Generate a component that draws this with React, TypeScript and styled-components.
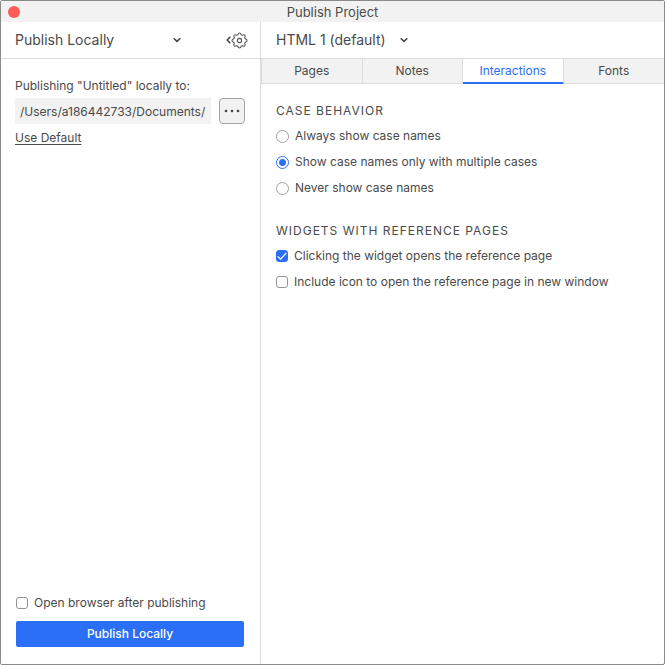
import React, { useState } from "react";
import styled, { createGlobalStyle } from "styled-components";

const GlobalStyle = createGlobalStyle`
  * { box-sizing: border-box; }
  body {
    margin: 0;
    background: #fff;
    color: #4a4a4a;
    font: 12px/16px Inter, "Liberation Sans", sans-serif;
  }
  button, input, select { font: inherit; color: inherit; margin: 0; }
`;

const Window = styled.div`
  display: flex;
  flex-direction: column;
  min-height: 100vh;
  border: 1px solid #8b8a8b;
  border-radius: 2px;
`;

const TitleBar = styled.header`
  display: grid;
  grid-template-columns: 20px 1fr 20px;
  align-items: center;
  height: 21px;
  padding: 0 7px;
  background: #f2f2f2;
`;

const CloseButton = styled.button`
  width: 12px;
  height: 12px;
  padding: 0;
  border: 0;
  border-radius: 50%;
  background: #fc5b57;
`;

const Title = styled.h1`
  margin: 0;
  font-size: 13px;
  font-weight: 400;
  text-align: center;
`;

const Body = styled.div`
  flex: 1;
  display: grid;
  grid-template-columns: 260px minmax(0, 1fr);
`;

const Sidebar = styled.aside`
  display: flex;
  flex-direction: column;
  border-right: 1px solid #dcdcdc;
`;

const PaneHeader = styled.div`
  display: flex;
  align-items: center;
  justify-content: space-between;
  height: 37px;
  padding: 0 12px 0 14px;
  border-bottom: 1px solid #dcdcdc;
`;

const MainHeader = styled(PaneHeader)`
  padding: 0 15px;
`;

const SelectBox = styled.div<{ $width: number }>`
  display: grid;
  align-items: center;
  width: ${(p) => p.$width}px;

  > * { grid-area: 1 / 1; }
  > svg { justify-self: end; pointer-events: none; }
`;

const Select = styled.select`
  appearance: none;
  width: 100%;
  height: 24px;
  padding: 0;
  border: 0;
  background: transparent;
  font-size: 14px;
`;

const IconButton = styled.button`
  display: flex;
  align-items: center;
  padding: 0;
  border: 0;
  background: none;
`;

const Destination = styled.div`
  flex: 1;
  display: flex;
  flex-direction: column;
  align-items: flex-start;
  padding: 19px 15px 0 14px;
`;

const PathRow = styled.div`
  display: flex;
  gap: 8px;
  width: 100%;
  margin: 4px 0 6px;
`;

const PathInput = styled.input`
  flex: 1;
  min-width: 0;
  height: 26px;
  padding: 0 5px;
  border: 0;
  background: #f2f2f2;
`;

const BrowseButton = styled.button`
  display: flex;
  align-items: center;
  justify-content: center;
  width: 26px;
  height: 26px;
  padding: 0;
  border: 1px solid #a3a3a3;
  border-radius: 4px;
  background: #f2f2f2;
`;

const TextLink = styled.a`
  color: inherit;
  text-underline-offset: 2px;
`;

const Footer = styled.footer`
  display: flex;
  flex-direction: column;
  gap: 10px;
  padding: 0 16px 17px 15px;
`;

const PublishButton = styled.button`
  height: 26px;
  border: 0;
  border-radius: 2px;
  background: #2b6ff6;
  color: #fff;
  font-weight: 500;
`;

const Tabs = styled.div`
  display: grid;
  grid-template-columns: repeat(4, 1fr);
  border-left: 1px solid #dcdcdc;
`;

const Tab = styled.button<{ $active: boolean }>`
  height: 25px;
  padding: 0;
  border: 0;
  border-right: 1px solid #dcdcdc;
  border-bottom: 1px solid ${(p) => (p.$active ? "#2b6ff6" : "#dcdcdc")};
  background: ${(p) => (p.$active ? "#fff" : "#f2f2f2")};
  color: ${(p) => (p.$active ? "#2b6ff6" : "inherit")};
  box-shadow: ${(p) => (p.$active ? "inset 0 -1px #2b6ff6" : "none")};

  &:last-child { border-right: 0; }
`;

const Settings = styled.div`
  display: flex;
  flex-direction: column;
  gap: 27px;
  padding: 19px 15px;
`;

const Group = styled.fieldset`
  display: flex;
  flex-direction: column;
  gap: 10px;
  min-width: 0;
  margin: 0;
  padding: 0;
  border: 0;
`;

const GroupTitle = styled.legend`
  margin-bottom: 9px;
  padding: 0;
  letter-spacing: 1px;
`;

const Option = styled.label`
  display: flex;
  align-items: center;
  gap: 6px;
`;

const Radio = styled.input`
  appearance: none;
  flex: none;
  width: 13px;
  height: 13px;
  border: 1px solid #a0a0a0;
  border-radius: 50%;
  background: #fff;

  &:checked {
    border-color: #2b6ff6;
    background: radial-gradient(#2b6ff6 0 3px, #fff 4px);
  }
`;

const CheckFrame = styled.span`
  display: grid;
  flex: none;

  > * { grid-area: 1 / 1; }
  > svg { pointer-events: none; }
`;

const CheckInput = styled.input`
  appearance: none;
  width: 12px;
  height: 12px;
  border: 1px solid #949494;
  border-radius: 3px;
  background: #fff;

  &:checked {
    border-color: #2b6ff6;
    background: #2b6ff6;
  }
`;

function Chevron() {
  return (
    <svg width="8" height="6" viewBox="0 0 8 6" fill="none" stroke="#444" strokeWidth="1.5" aria-hidden="true">
      <path d="M0.7 1.2 L4 4.4 L7.3 1.2" />
    </svg>
  );
}

function Dropdown(props: { label: string; value: string; width: number }) {
  return (
    <SelectBox $width={props.width}>
      <Select aria-label={props.label} defaultValue={props.value}>
        <option>{props.value}</option>
      </Select>
      <Chevron />
    </SelectBox>
  );
}

function Checkbox(props: { label: string; initial?: boolean }) {
  const [checked, setChecked] = useState(Boolean(props.initial));
  return (
    <Option>
      <CheckFrame>
        <CheckInput type="checkbox" checked={checked} onChange={() => setChecked(!checked)} />
        {checked && (
          <svg width="12" height="12" viewBox="0 0 12 12" fill="none" stroke="#fff" strokeWidth="1.2" aria-hidden="true">
            <path d="M1.6 6.4 L4.6 9.2 L10.4 2.8" />
          </svg>
        )}
      </CheckFrame>
      {props.label}
    </Option>
  );
}

const TABS = ["Pages", "Notes", "Interactions", "Fonts"];
const CASES = [
  "Always show case names",
  "Show case names only with multiple cases",
  "Never show case names",
];

export default function App() {
  const [tab, setTab] = useState("Interactions");
  const [caseMode, setCaseMode] = useState(CASES[1]);

  return (
    <>
      <GlobalStyle />
      <Window>
        <TitleBar>
          <CloseButton aria-label="Close" />
          <Title>Publish Project</Title>
        </TitleBar>
        <Body>
          <Sidebar>
            <PaneHeader>
              <Dropdown label="Publish target" value="Publish Locally" width={166} />
              <IconButton aria-label="Publish settings">
                <svg width="5" height="8" viewBox="0 0 5 8" fill="none" stroke="#444" strokeWidth="1.5" aria-hidden="true">
                  <path d="M4.3 0.8 L1.2 4 L4.3 7.2" />
                </svg>
                <svg width="17" height="17" viewBox="-12 -12 24 24" fill="none" stroke="#555" strokeWidth="1.5" strokeLinejoin="round" aria-hidden="true">
                  <circle r="3" />
                  <path d="M-2.4 -8 Q-1.8 -10.6 0 -10.6 Q1.8 -10.6 2.4 -8 L4 -7.3 Q6.2 -8.8 7.5 -7.5 Q8.8 -6.2 7.3 -4 L8 -2.4 Q10.6 -1.8 10.6 0 Q10.6 1.8 8 2.4 L7.3 4 Q8.8 6.2 7.5 7.5 Q6.2 8.8 4 7.3 L2.4 8 Q1.8 10.6 0 10.6 Q-1.8 10.6 -2.4 8 L-4 7.3 Q-6.2 8.8 -7.5 7.5 Q-8.8 6.2 -7.3 4 L-8 2.4 Q-10.6 1.8 -10.6 0 Q-10.6 -1.8 -8 -2.4 L-7.3 -4 Q-8.8 -6.2 -7.5 -7.5 Q-6.2 -8.8 -4 -7.3 Z" />
                </svg>
              </IconButton>
            </PaneHeader>
            <Destination>
              <label htmlFor="path">Publishing "Untitled" locally to:</label>
              <PathRow>
                <PathInput id="path" defaultValue="/Users/a186442733/Documents/" />
                <BrowseButton aria-label="Browse">
                  <svg width="16" height="4" viewBox="0 0 16 4" fill="#444" aria-hidden="true">
                    <circle cx="2" cy="2" r="1.3" />
                    <circle cx="8" cy="2" r="1.3" />
                    <circle cx="14" cy="2" r="1.3" />
                  </svg>
                </BrowseButton>
              </PathRow>
              <TextLink href="#default">Use Default</TextLink>
            </Destination>
            <Footer>
              <Checkbox label="Open browser after publishing" />
              <PublishButton>Publish Locally</PublishButton>
            </Footer>
          </Sidebar>
          <main>
            <MainHeader>
              <Dropdown label="Configuration" value="HTML 1 (default)" width={132} />
            </MainHeader>
            <Tabs role="tablist">
              {TABS.map((name) => (
                <Tab key={name} role="tab" aria-selected={tab === name} $active={tab === name} onClick={() => setTab(name)}>
                  {name}
                </Tab>
              ))}
            </Tabs>
            <Settings>
              <Group>
                <GroupTitle>CASE BEHAVIOR</GroupTitle>
                {CASES.map((name) => (
                  <Option key={name}>
                    <Radio type="radio" name="case" checked={caseMode === name} onChange={() => setCaseMode(name)} />
                    {name}
                  </Option>
                ))}
              </Group>
              <Group>
                <GroupTitle>WIDGETS WITH REFERENCE PAGES</GroupTitle>
                <Checkbox label="Clicking the widget opens the reference page" initial />
                <Checkbox label="Include icon to open the reference page in new window" />
              </Group>
            </Settings>
          </main>
        </Body>
      </Window>
    </>
  );
}
